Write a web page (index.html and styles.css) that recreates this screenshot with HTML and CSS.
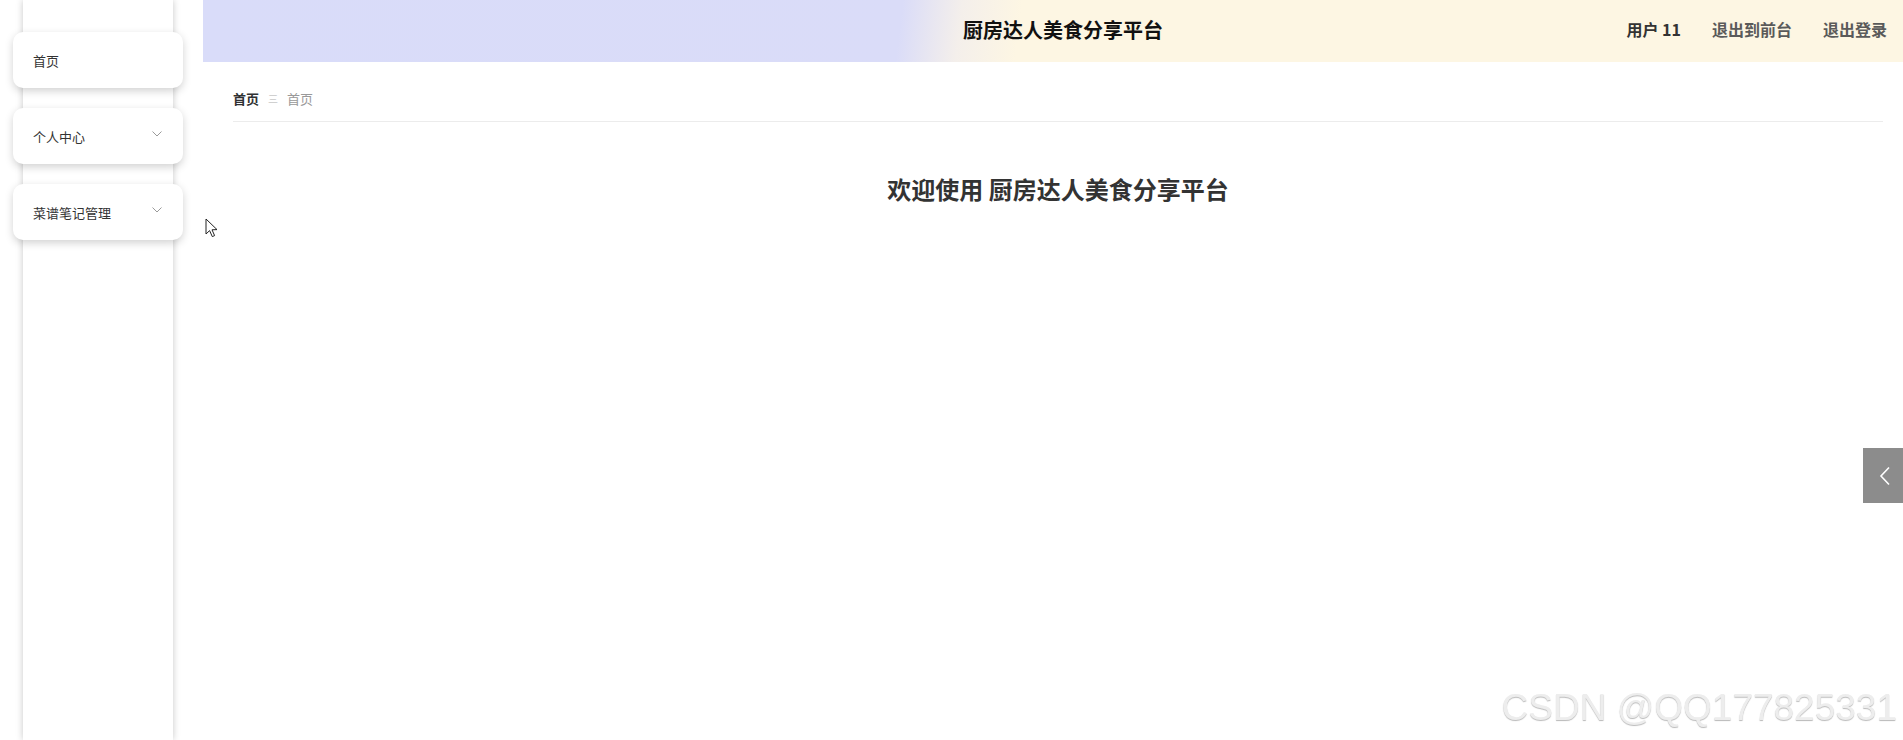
FILE: index.html
```html
<!DOCTYPE html>
<html lang="zh">
<head>
<meta charset="utf-8">
<title>厨房达人美食分享平台</title>
<link rel="stylesheet" href="styles.css">
</head>
<body>
<div class="app">
  <aside class="sidebar">
    <div class="menu">
      <div class="menu-item"><span>首页</span></div>
      <div class="menu-item"><span>个人中心</span>
        <svg class="chev" width="10" height="6" viewBox="0 0 10 6"><path d="M0.5 0.5 L5 5 L9.5 0.5" fill="none" stroke="#9a9a9a" stroke-width="1"/></svg>
      </div>
      <div class="menu-item"><span>菜谱笔记管理</span>
        <svg class="chev" width="10" height="6" viewBox="0 0 10 6"><path d="M0.5 0.5 L5 5 L9.5 0.5" fill="none" stroke="#9a9a9a" stroke-width="1"/></svg>
      </div>
    </div>
  </aside>
  <main class="main">
    <header class="topbar">
      <div class="topbar-side"></div>
      <div class="site-title">厨房达人美食分享平台</div>
      <nav class="topbar-links">
        <span class="user">用户 11</span>
        <span class="link">退出到前台</span>
        <span class="link">退出登录</span>
      </nav>
    </header>
    <section class="content">
      <div class="breadcrumb">
        <span class="crumb-current">首页</span>
        <span class="crumb-sep">三</span>
        <span class="crumb">首页</span>
      </div>
      <h1 class="welcome">欢迎使用 厨房达人美食分享平台</h1>
    </section>
  </main>
</div>
<div class="side-tab">
  <svg width="12" height="20" viewBox="0 0 12 20"><path d="M10 1.5 L2 10 L10 18.5" fill="none" stroke="#ffffff" stroke-width="1.6"/></svg>
</div>
<div class="cursor">
  <svg width="14" height="20" viewBox="0 0 14 20"><path d="M1 1 L1 16 L4.6 12.6 L7.3 18.6 L9.6 17.6 L7 11.8 L12 11.6 Z" fill="#fff" stroke="#222" stroke-width="1" stroke-linejoin="round"/></svg>
</div>
<div class="watermark">CSDN @QQ177825331</div>
</body>
</html>
```
FILE: styles.css
```css
html, body {
  margin: 0;
  padding: 0;
  height: 100%;
  background: #ffffff;
  font-family: "Noto Sans CJK SC", "Noto Sans", sans-serif;
  color: #333;
}

.app {
  display: flex;
  min-height: 740px;
}

.sidebar {
  width: 203px;
  flex: none;
  padding-left: 23px;
  box-sizing: border-box;
}

.menu {
  width: 150px;
  min-height: 740px;
  background: #fff;
  box-shadow: 0 0 7px rgba(0, 0, 0, 0.22);
  padding-top: 32px;
  box-sizing: border-box;
  display: flex;
  flex-direction: column;
  gap: 20px;
}

.menu-item {
  margin: 0 -10px;
  height: 56px;
  background: #fff;
  border-radius: 10px;
  box-shadow: 0 3px 8px rgba(0, 0, 0, 0.18);
  display: flex;
  align-items: center;
  justify-content: space-between;
  padding: 0 21px 0 20px;
  font-size: 13px;
  color: #333;
}

.chev {
  margin-top: -4px;
}

.main {
  flex: 1;
  display: flex;
  flex-direction: column;
}

.topbar {
  height: 62px;
  display: grid;
  grid-template-columns: 1fr auto 1fr;
  align-items: center;
  padding: 0 16px 4px 36px;
  box-sizing: border-box;
  background: linear-gradient(97deg, #d9dcf9 0%, #dadcf8 41%, #f4efeb 44.5%, #fdf6e3 48%, #fdf6e3 100%);
}

.site-title {
  font-size: 20px;
  font-weight: 700;
  color: #111;
  letter-spacing: 0;
}

.topbar-links {
  display: flex;
  justify-content: flex-end;
  gap: 31px;
  font-size: 16px;
  white-space: nowrap;
}

.user {
  font-weight: 700;
  color: #333;
}

.link {
  font-weight: 600;
  color: #5a5a5a;
}

.content {
  padding: 0 20px 0 30px;
}

.breadcrumb {
  margin-top: 27px;
  height: 20px;
  line-height: 20px;
  padding-bottom: 12px;
  border-bottom: 1px solid #ececec;
  font-size: 13px;
  display: flex;
  gap: 9px;
}

.crumb-current {
  font-weight: 700;
  color: #303133;
}

.crumb-sep {
  color: #c8c8c8;
  font-size: 10px;
}

.crumb {
  color: #999;
}

.welcome {
  margin: 51px 0 0;
  text-align: center;
  font-size: 24px;
  line-height: 32px;
  font-weight: 700;
  color: #333;
}

.side-tab {
  position: fixed;
  right: 0;
  top: 448px;
  width: 40px;
  height: 55px;
  background: #8c8c8c;
  display: flex;
  align-items: center;
  justify-content: center;
  padding-left: 4px;
  box-sizing: border-box;
}

.cursor {
  position: fixed;
  left: 205px;
  top: 218px;
  line-height: 0;
}

.watermark {
  position: fixed;
  right: 6px;
  bottom: 12px;
  font-family: "Liberation Sans", Arial, sans-serif;
  font-size: 37px;
  line-height: 40px;
  color: #ededed;
  text-shadow: 0 1px 1px rgba(0, 0, 0, 0.28);
  letter-spacing: 0;
}
```
